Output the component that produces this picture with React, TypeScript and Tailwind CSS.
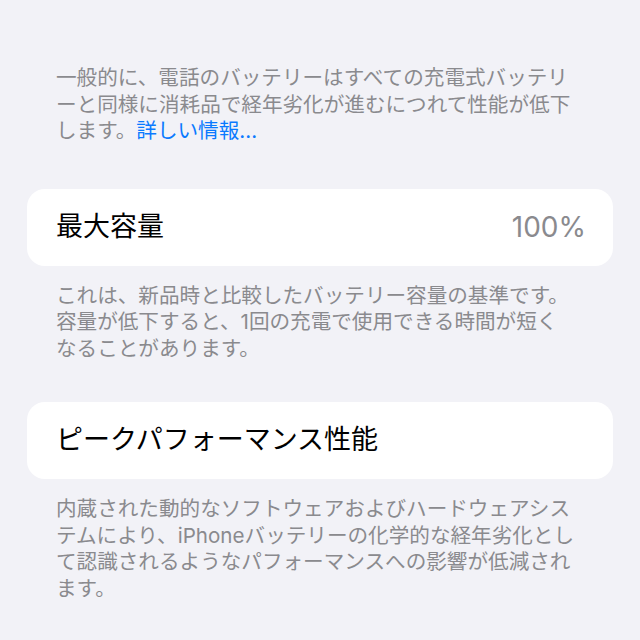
const font = { fontFamily: '"Inter", "Noto Sans CJK JP", sans-serif' };

const Footer = ({ lines }: { lines: React.ReactNode[] }) => (
  <p className="pl-[56px] pr-4 text-[20.6px] leading-[26.5px] text-[#8a8a8e] whitespace-nowrap">
    {lines.map((line, i) => (
      <span key={i} className="block">
        {line}
      </span>
    ))}
  </p>
);

const Card = ({ label, value }: { label: string; value?: string }) => (
  <div className="mx-[27px] flex h-[77px] items-center justify-between rounded-[18px] bg-white pl-[29px] pr-[27px] text-[27px] text-black">
    <span>{label}</span>
    {value && <span className="text-[28px] text-[#8a8a8e]">{value}</span>}
  </div>
);

export default function App() {
  return (
    <div className="h-[640px] w-[640px] overflow-hidden bg-[#f2f2f7] pt-[65px]" style={font}>
      <Footer
        lines={[
          "一般的に、電話のバッテリーはすべての充電式バッテリ",
          "ーと同様に消耗品で経年劣化が進むにつれて性能が低下",
          <>
            します。<span className="text-[#0a7aff]">詳しい情報...</span>
          </>,
        ]}
      />

      <div className="mt-[44px]">
        <Card label="最大容量" value="100%" />
      </div>

      <div className="mt-[17px]">
        <Footer
          lines={[
            "これは、新品時と比較したバッテリー容量の基準です。",
            "容量が低下すると、1回の充電で使用できる時間が短く",
            "なることがあります。",
          ]}
        />
      </div>

      <div className="mt-[40px]">
        <Card label="ピークパフォーマンス性能" />
      </div>

      <div className="mt-[17px]">
        <Footer
          lines={[
            "内蔵された動的なソフトウェアおよびハードウェアシス",
            "テムにより、iPhoneバッテリーの化学的な経年劣化とし",
            "て認識されるようなパフォーマンスへの影響が低減され",
            "ます。",
          ]}
        />
      </div>
    </div>
  );
}
